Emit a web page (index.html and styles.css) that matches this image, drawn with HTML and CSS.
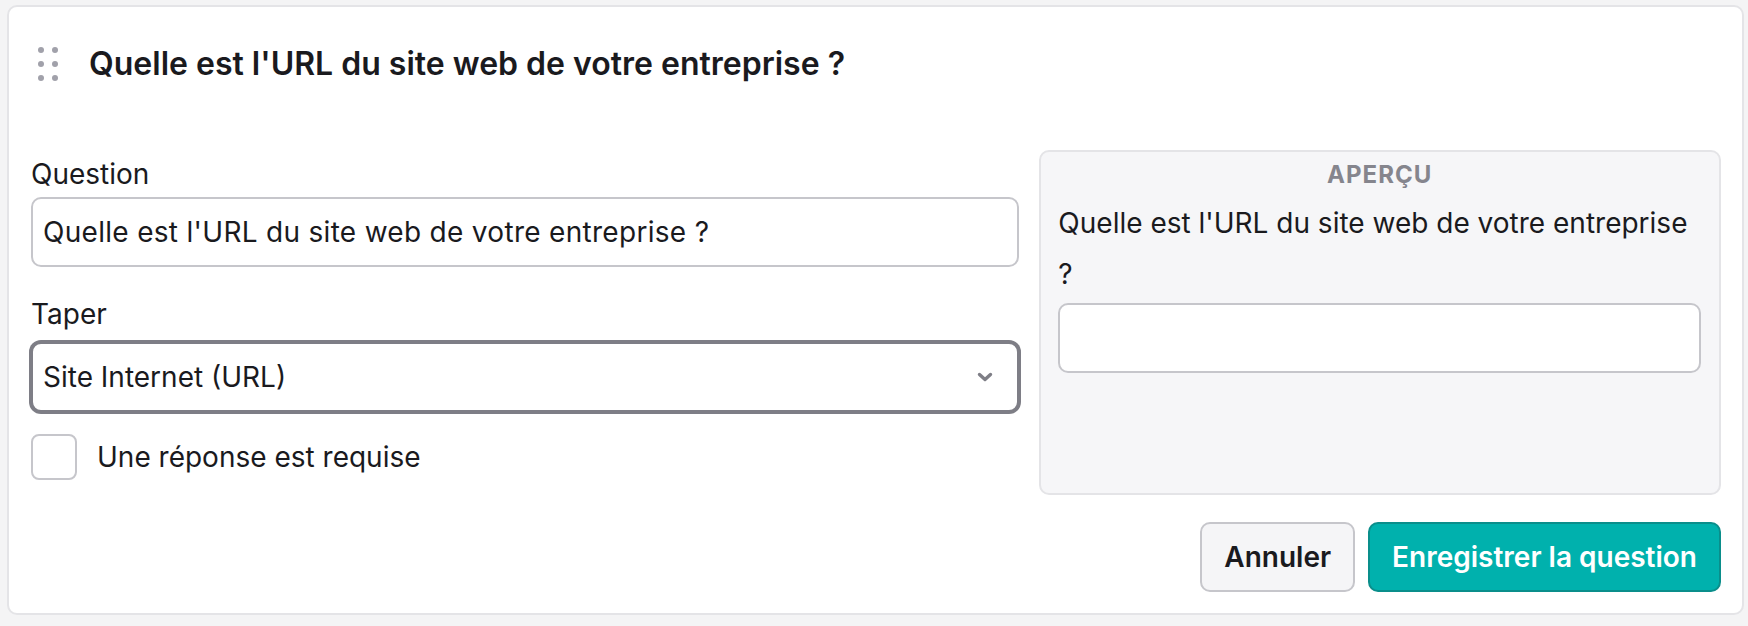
FILE: index.html
```html
<!DOCTYPE html>
<html lang="fr">
<head>
  <meta charset="UTF-8" />
  <meta name="viewport" content="width=device-width, initial-scale=1.0"/>
  <title>Question – URL du site web</title>
  <link rel="stylesheet" href="styles.css">
</head>
<body>
  <div class="card">
    <div class="card-head">
      <span class="grip">
        <i></i><i></i><i></i><i></i><i></i><i></i>
      </span>
      <h2>Quelle est l'URL du site web de votre entreprise ?</h2>
    </div>

    <div class="editor">
      <div class="fields">
        <label class="field-label label-question" for="question">Question</label>
        <input id="question" class="field" type="text" value="Quelle est l'URL du site web de votre entreprise ?">

        <label class="field-label label-type">Taper</label>
        <div class="field select">
          <span>Site Internet (URL)</span>
          <svg width="16" height="10" viewBox="0 0 16 10">
            <path d="M2.5 2.5 L8 7.5 L13.5 2.5" fill="none" stroke="#7e7e86" stroke-width="3.4" stroke-linecap="round" stroke-linejoin="round"/>
          </svg>
        </div>

        <label class="check">
          <span class="box"></span>
          Une réponse est requise
        </label>
      </div>

      <div class="preview">
        <div class="preview-title">APERÇU</div>
        <p class="preview-q">Quelle est l'URL du site web de votre entreprise ?</p>
        <div class="preview-input"></div>
      </div>
    </div>

    <div class="actions">
      <button class="btn btn-ghost">Annuler</button>
      <button class="btn btn-primary">Enregistrer la question</button>
    </div>
  </div>
</body>
</html>
```

FILE: styles.css
```css
:root {
  --cor-texto: #1a1a1e;
  --cor-fundo: #f4f4f5;
  --cor-borda: #e4e4e7;
  --cor-input: #c6c6cb;
  --cor-primaria: #00b1ad;
  --radius: 10px;
}
* { box-sizing: border-box; margin: 0; padding: 0; }
body {
  font-family: Inter, "Noto Sans", sans-serif;
  font-size: 28px;
  color: var(--cor-texto);
  background: var(--cor-fundo);
  padding: 5px 4px 0 7px;
}
.card {
  background: #fff;
  border: 2px solid var(--cor-borda);
  border-radius: var(--radius);
  padding: 22px 21px 21px 22px;
}
.card-head {
  display: flex;
  align-items: center;
  height: 70px;
}
.grip {
  display: grid;
  grid-template-columns: 6px 6px;
  gap: 8px;
  margin-left: 7px;
  margin-right: 31px;
}
.grip i {
  width: 6px;
  height: 6px;
  border-radius: 50%;
  background: #a1a1aa;
}
.card-head h2 {
  font-size: 32px;
  font-weight: 600;
  line-height: 40px;
}
.editor {
  display: grid;
  grid-template-columns: minmax(0, 1.45fr) minmax(0, 1fr);
  gap: 20px;
  align-items: start;
  margin-top: 51px;
}
.fields {
  display: flex;
  flex-direction: column;
}
.field-label {
  display: block;
  line-height: 40px;
}
.label-question { margin: 4px 0 3px; }
.label-type { margin: 27px 0 8px; }
.field {
  height: 70px;
  width: 100%;
  border: 2px solid var(--cor-input);
  border-radius: var(--radius);
  padding: 0 10px;
  font: inherit;
  letter-spacing: 0.3px;
  color: inherit;
  background: #fff;
  outline: none;
}
.select {
  display: flex;
  align-items: center;
  justify-content: space-between;
  letter-spacing: 0;
  border-color: #7e7e86;
  box-shadow: 0 0 0 2px #7e7e86;
  padding-right: 24px;
}
.check {
  display: flex;
  align-items: center;
  gap: 20px;
  margin-top: 22px;
  line-height: 46px;
}
.check .box {
  width: 46px;
  height: 46px;
  border: 2px solid var(--cor-input);
  border-radius: 8px;
  background: #fff;
}
.preview {
  min-height: 345px;
  background: #f6f6f8;
  border: 2px solid var(--cor-borda);
  border-radius: var(--radius);
  padding: 5px 18px 17px 17px;
}
.preview-title {
  text-align: center;
  font-size: 24px;
  font-weight: 700;
  letter-spacing: 1px;
  line-height: 35px;
  color: #85858d;
  margin-bottom: 6px;
}
.preview-q {
  line-height: 51px;
}
.preview-input {
  height: 70px;
  margin-top: 3px;
  background: #fff;
  border: 2px solid var(--cor-input);
  border-radius: var(--radius);
}
.actions {
  display: flex;
  justify-content: flex-end;
  gap: 13px;
  margin-top: 27px;
}
.btn {
  height: 70px;
  padding: 0 22px;
  border-radius: var(--radius);
  font: inherit;
  font-weight: 600;
  cursor: pointer;
}
.btn-ghost {
  background: #f5f5f7;
  border: 2px solid var(--cor-input);
  color: var(--cor-texto);
}
.btn-primary {
  background: var(--cor-primaria);
  border: 2px solid #0a8e8b;
  color: #fff;
}
.btn-primary:hover { background: #009e9a; }
```
